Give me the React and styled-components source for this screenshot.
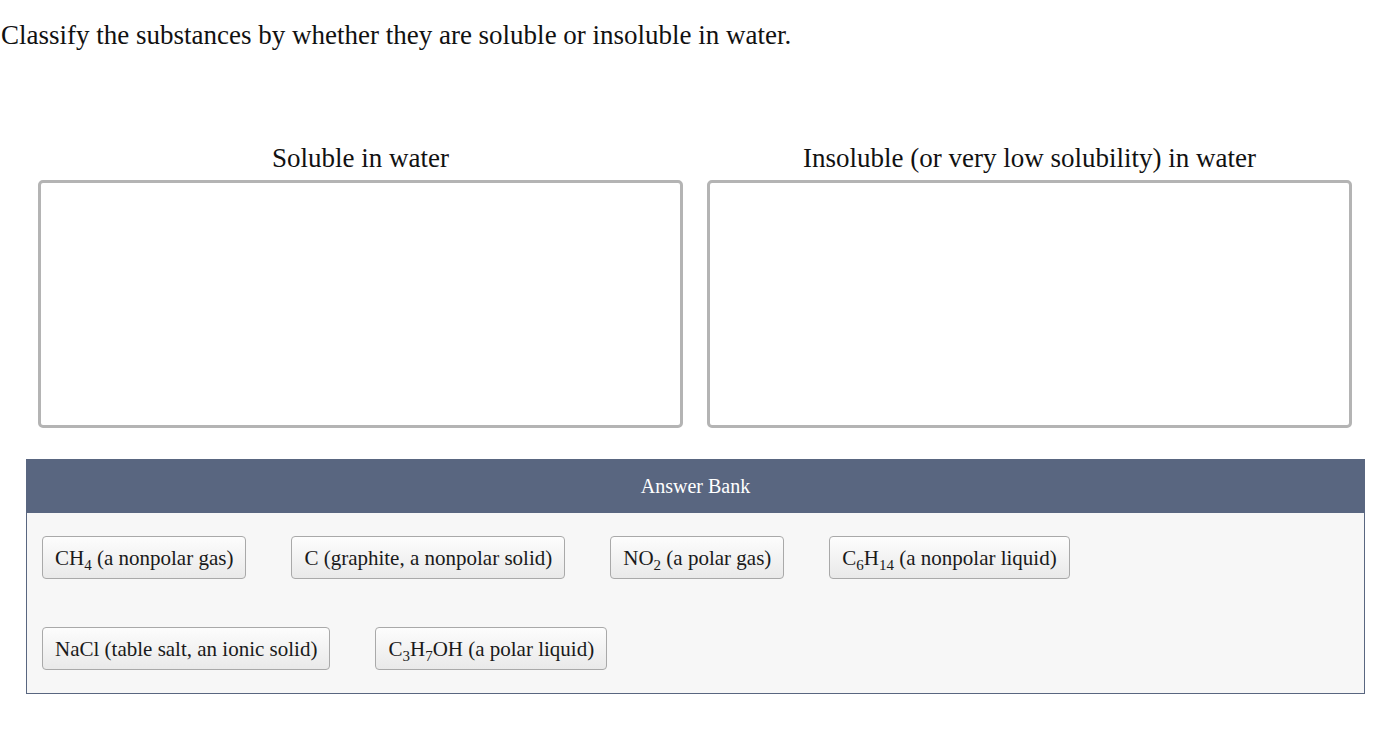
import React from "react";
import styled, { createGlobalStyle } from "styled-components";

const Global = createGlobalStyle`
  html, body { margin: 0; padding: 0; background: #ffffff; }
  body { font-family: "Liberation Serif", "Times New Roman", serif; color: #111; }
`;

const Page = styled.div`
  width: 1393px;
  padding-bottom: 40px;
`;

const Prompt = styled.p`
  margin: 0;
  padding: 20px 0 0 1px;
  font-size: 27px;
  line-height: 30px;
  color: #111;
`;

const Columns = styled.div`
  display: grid;
  grid-template-columns: 1fr 1fr;
  column-gap: 24px;
  width: 1314px;
  margin: 93px 0 0 38px;
`;

const Column = styled.div`
  display: flex;
  flex-direction: column;
  align-items: stretch;
`;

const ColumnTitle = styled.div`
  font-size: 27px;
  line-height: 30px;
  text-align: center;
  margin-bottom: 7px;
  color: #111;
`;

const DropZone = styled.div`
  height: 242px;
  border: 3px solid #b4b4b4;
  border-radius: 5px;
  background: #ffffff;
`;

const Bank = styled.section`
  width: 1339px;
  margin: 31px 0 0 26px;
`;

const BankHeader = styled.div`
  height: 54px;
  background: #596680;
  color: #ffffff;
  display: flex;
  align-items: center;
  justify-content: center;
  font-size: 20px;
`;

const BankBody = styled.div`
  display: flex;
  flex-direction: column;
  gap: 48px;
  padding: 23px 15px;
  background: #f7f7f7;
  border: 1px solid #596680;
  border-top: none;
`;

const ChipRow = styled.div`
  display: flex;
  gap: 45px;
`;

const Chip = styled.div`
  box-sizing: border-box;
  height: 43px;
  padding: 0 12px;
  display: flex;
  align-items: center;
  font-size: 21px;
  color: #1a1a1a;
  border: 1px solid #a9a9a9;
  border-radius: 4px;
  background: linear-gradient(#fdfdfd, #e9e9e9);
  white-space: nowrap;
`;

const ChipText = styled.span`
  line-height: 24px;
`;

const Sub = styled.span`
  font-size: 15px;
  line-height: 0;
  vertical-align: -5px;
`;

const rows = [
  [
    <>CH<Sub>4</Sub> (a nonpolar gas)</>,
    <>C (graphite, a nonpolar solid)</>,
    <>NO<Sub>2</Sub> (a polar gas)</>,
    <>C<Sub>6</Sub>H<Sub>14</Sub> (a nonpolar liquid)</>,
  ],
  [
    <>NaCl (table salt, an ionic solid)</>,
    <>C<Sub>3</Sub>H<Sub>7</Sub>OH (a polar liquid)</>,
  ],
];

export default function App() {
  return (
    <Page>
      <Global />
      <Prompt>Classify the substances by whether they are soluble or insoluble in water.</Prompt>
      <Columns>
        <Column>
          <ColumnTitle>Soluble in water</ColumnTitle>
          <DropZone />
        </Column>
        <Column>
          <ColumnTitle>Insoluble (or very low solubility) in water</ColumnTitle>
          <DropZone />
        </Column>
      </Columns>
      <Bank>
        <BankHeader>Answer Bank</BankHeader>
        <BankBody>
          {rows.map((row, r) => (
            <ChipRow key={r}>
              {row.map((it, i) => (
                <Chip key={i}>
                  <ChipText>{it}</ChipText>
                </Chip>
              ))}
            </ChipRow>
          ))}
        </BankBody>
      </Bank>
    </Page>
  );
}
